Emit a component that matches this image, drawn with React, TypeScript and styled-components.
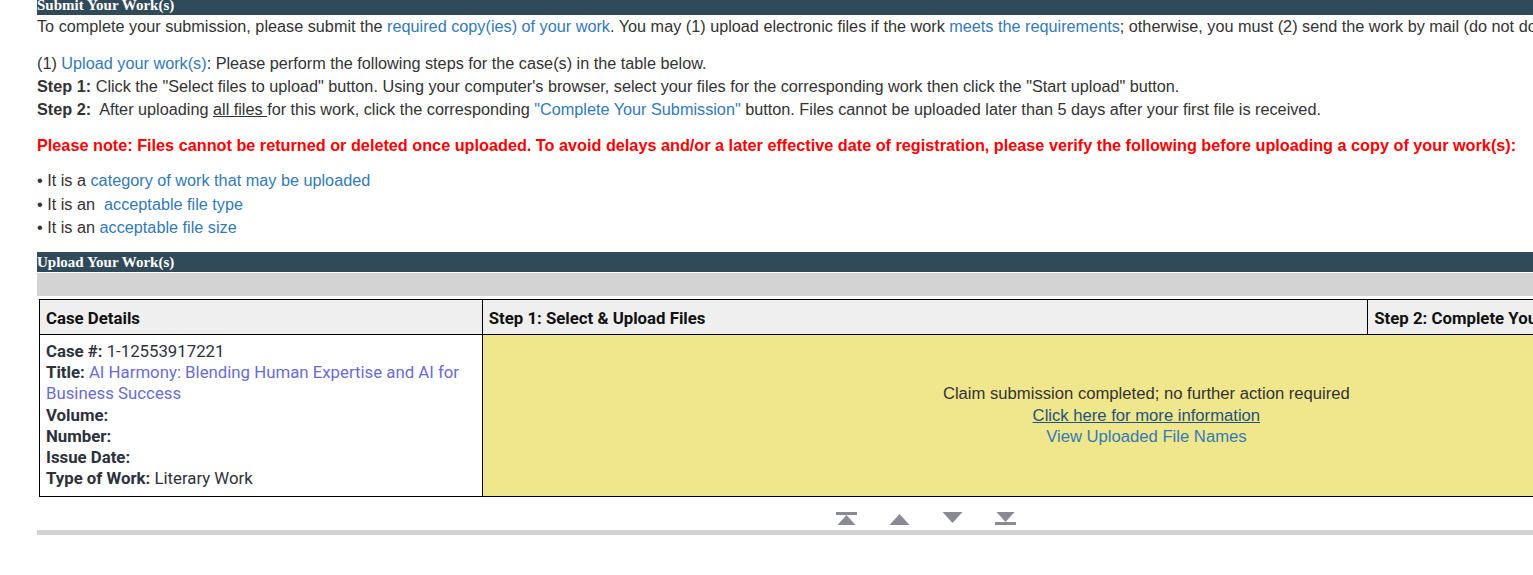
import React from 'react';
import styled, { createGlobalStyle } from 'styled-components';

const GlobalStyle = createGlobalStyle`
  html, body { margin: 0; padding: 0; overflow: hidden; background: #fff; }
  body {
    font-family: "Liberation Sans", Arial, sans-serif;
    font-size: 16.24px;
    line-height: 23px;
    color: #333;
  }
`;

const Page = styled.main`
  width: 1778px;
  margin-left: 37px;
`;

const SectionBar = styled.h2<{ $offset?: number }>`
  margin: ${(p) => p.$offset ?? 0}px 0 0;
  height: 20px;
  background: #314a59;
  color: #fff;
  font-family: "Liberation Serif", "Times New Roman", serif;
  font-weight: bold;
  font-size: 15px;
  line-height: 20px;
  white-space: nowrap;
`;

const Para = styled.p<{ $gap?: number; $note?: boolean }>`
  margin: ${(p) => p.$gap ?? 0}px 0 0;
  white-space: nowrap;
  color: ${(p) => (p.$note ? '#ff0000' : '#333')};
  font-weight: ${(p) => (p.$note ? 'bold' : 'normal')};
`;

const Link = styled.a`
  color: #337ab7;
  text-decoration: none;
  cursor: pointer;
`;

const Under = styled.span`
  text-decoration: underline;
`;

const Bullets = styled.ul`
  list-style: none;
  margin: 12px 0 0;
  padding: 0;
  line-height: 23.5px;
`;

const Toolbar = styled.div`
  height: 23px;
  margin-top: 1px;
  background: #d4d3d4;
`;

const Table = styled.table`
  margin: 3px 0 0 2px;
  width: 1772px;
  border-collapse: collapse;
  table-layout: fixed;
  font-family: Roboto, "Liberation Sans", sans-serif;
  font-size: 16.8px;
`;

const HeadCell = styled.th`
  border: 1px solid #000;
  background: #efefef;
  color: #111;
  font-weight: bold;
  text-align: left;
  height: 33px;
  padding: 1px 6px 0;
  line-height: 20px;
  white-space: nowrap;
  overflow: hidden;
  vertical-align: middle;
`;

const DetailCell = styled.td`
  border: 1px solid #000;
  background: #fff;
  color: #2d313c;
  padding: 6px 6px 7px;
  line-height: 21.2px;
  vertical-align: top;
`;

const Label = styled.b`
  font-weight: bold;
`;

const TitleText = styled.span`
  color: #6b6bd4;
`;

const StatusCell = styled.td`
  border: 1px solid #000;
  background: #f0e68c;
  text-align: center;
  vertical-align: middle;
  font-family: "Liberation Sans", Arial, sans-serif;
  font-size: 16.65px;
  color: #333;
  line-height: 21.5px;
`;

const InfoLink = styled.a`
  color: #23527c;
  text-decoration: underline;
  cursor: pointer;
`;

const Pager = styled.nav`
  display: flex;
  justify-content: center;
  gap: 32px;
  margin-top: 15px;
  height: 13px;
`;

const PagerButton = styled.button`
  border: 0;
  padding: 0;
  background: none;
  width: 21px;
  height: 13px;
  display: flex;
  cursor: pointer;
  svg { display: block; }
`;

const BottomRule = styled.div`
  height: 5px;
  margin-top: 5px;
  background: #d4d3d4;
`;

const iconColor = '#8a8a94';

const FirstIcon = () => (
  <svg width="21" height="13" viewBox="0 0 21 13">
    <rect x="0" y="0" width="21" height="3" fill={iconColor} />
    <polygon points="10.5,3 1.5,13 19.5,13" fill={iconColor} />
  </svg>
);
const UpIcon = () => (
  <svg width="21" height="13" viewBox="0 0 21 13">
    <polygon points="10.5,2 0.5,13 20.5,13" fill={iconColor} />
  </svg>
);
const DownIcon = () => (
  <svg width="21" height="13" viewBox="0 0 21 13">
    <polygon points="0.5,0 20.5,0 10.5,11" fill={iconColor} />
  </svg>
);
const LastIcon = () => (
  <svg width="21" height="13" viewBox="0 0 21 13">
    <polygon points="1.5,0 19.5,0 10.5,10" fill={iconColor} />
    <rect x="0" y="10" width="21" height="3" fill={iconColor} />
  </svg>
);

export default function App() {
  return (
    <>
      <GlobalStyle />
      <Page>
        <SectionBar $offset={-5}>Submit Your Work(s)</SectionBar>
        <Para>
          To complete your submission, please submit the <Link>required copy(ies) of your work</Link>. You may (1) upload
          electronic files if the work <Link>meets the requirements</Link>; otherwise, you must (2) send the work by mail
          (do not do both).
        </Para>
        <Para $gap={14}>
          (1) <Link>Upload your work(s)</Link>: Please perform the following steps for the case(s) in the table below.
          <br />
          <b>Step 1:</b> Click the "Select files to upload" button. Using your computer's browser, select your files for
          the corresponding work then click the "Start upload" button.
          <br />
          <b>Step 2:</b>&nbsp; After uploading <Under>all files </Under>for this work, click the corresponding{' '}
          <Link>"Complete Your Submission"</Link> button. Files cannot be uploaded later than 5 days after your first
          file is received.
        </Para>
        <Para $gap={13} $note>
          Please note: Files cannot be returned or deleted once uploaded. To avoid delays and/or a later effective date
          of registration, please verify the following before uploading a copy of your work(s):
        </Para>
        <Bullets>
          <li>
            • It is a <Link>category of work that may be uploaded</Link>
          </li>
          <li>
            • It is an&nbsp; <Link>acceptable file type</Link>
          </li>
          <li>
            • It is an <Link>acceptable file size</Link>
          </li>
        </Bullets>
        <SectionBar $offset={12.5}>Upload Your Work(s)</SectionBar>
        <Toolbar />
        <Table>
          <colgroup>
            <col style={{ width: '25%' }} />
            <col style={{ width: '50%' }} />
            <col style={{ width: '25%' }} />
          </colgroup>
          <thead>
            <tr>
              <HeadCell>Case Details</HeadCell>
              <HeadCell>Step 1: Select &amp; Upload Files</HeadCell>
              <HeadCell>Step 2: Complete Your Submission</HeadCell>
            </tr>
          </thead>
          <tbody>
            <tr>
              <DetailCell>
                <Label>Case #:</Label> 1-12553917221
                <br />
                <Label>Title:</Label> <TitleText>AI Harmony: Blending Human Expertise and AI for Business Success</TitleText>
                <br />
                <Label>Volume:</Label>
                <br />
                <Label>Number:</Label>
                <br />
                <Label>Issue Date:</Label>
                <br />
                <Label>Type of Work:</Label> Literary Work
              </DetailCell>
              <StatusCell colSpan={2}>
                Claim submission completed; no further action required
                <br />
                <InfoLink>Click here for more information</InfoLink>
                <br />
                <Link>View Uploaded File Names</Link>
              </StatusCell>
            </tr>
          </tbody>
        </Table>
        <Pager>
          <PagerButton aria-label="First">
            <FirstIcon />
          </PagerButton>
          <PagerButton aria-label="Previous">
            <UpIcon />
          </PagerButton>
          <PagerButton aria-label="Next">
            <DownIcon />
          </PagerButton>
          <PagerButton aria-label="Last">
            <LastIcon />
          </PagerButton>
        </Pager>
        <BottomRule />
      </Page>
    </>
  );
}
